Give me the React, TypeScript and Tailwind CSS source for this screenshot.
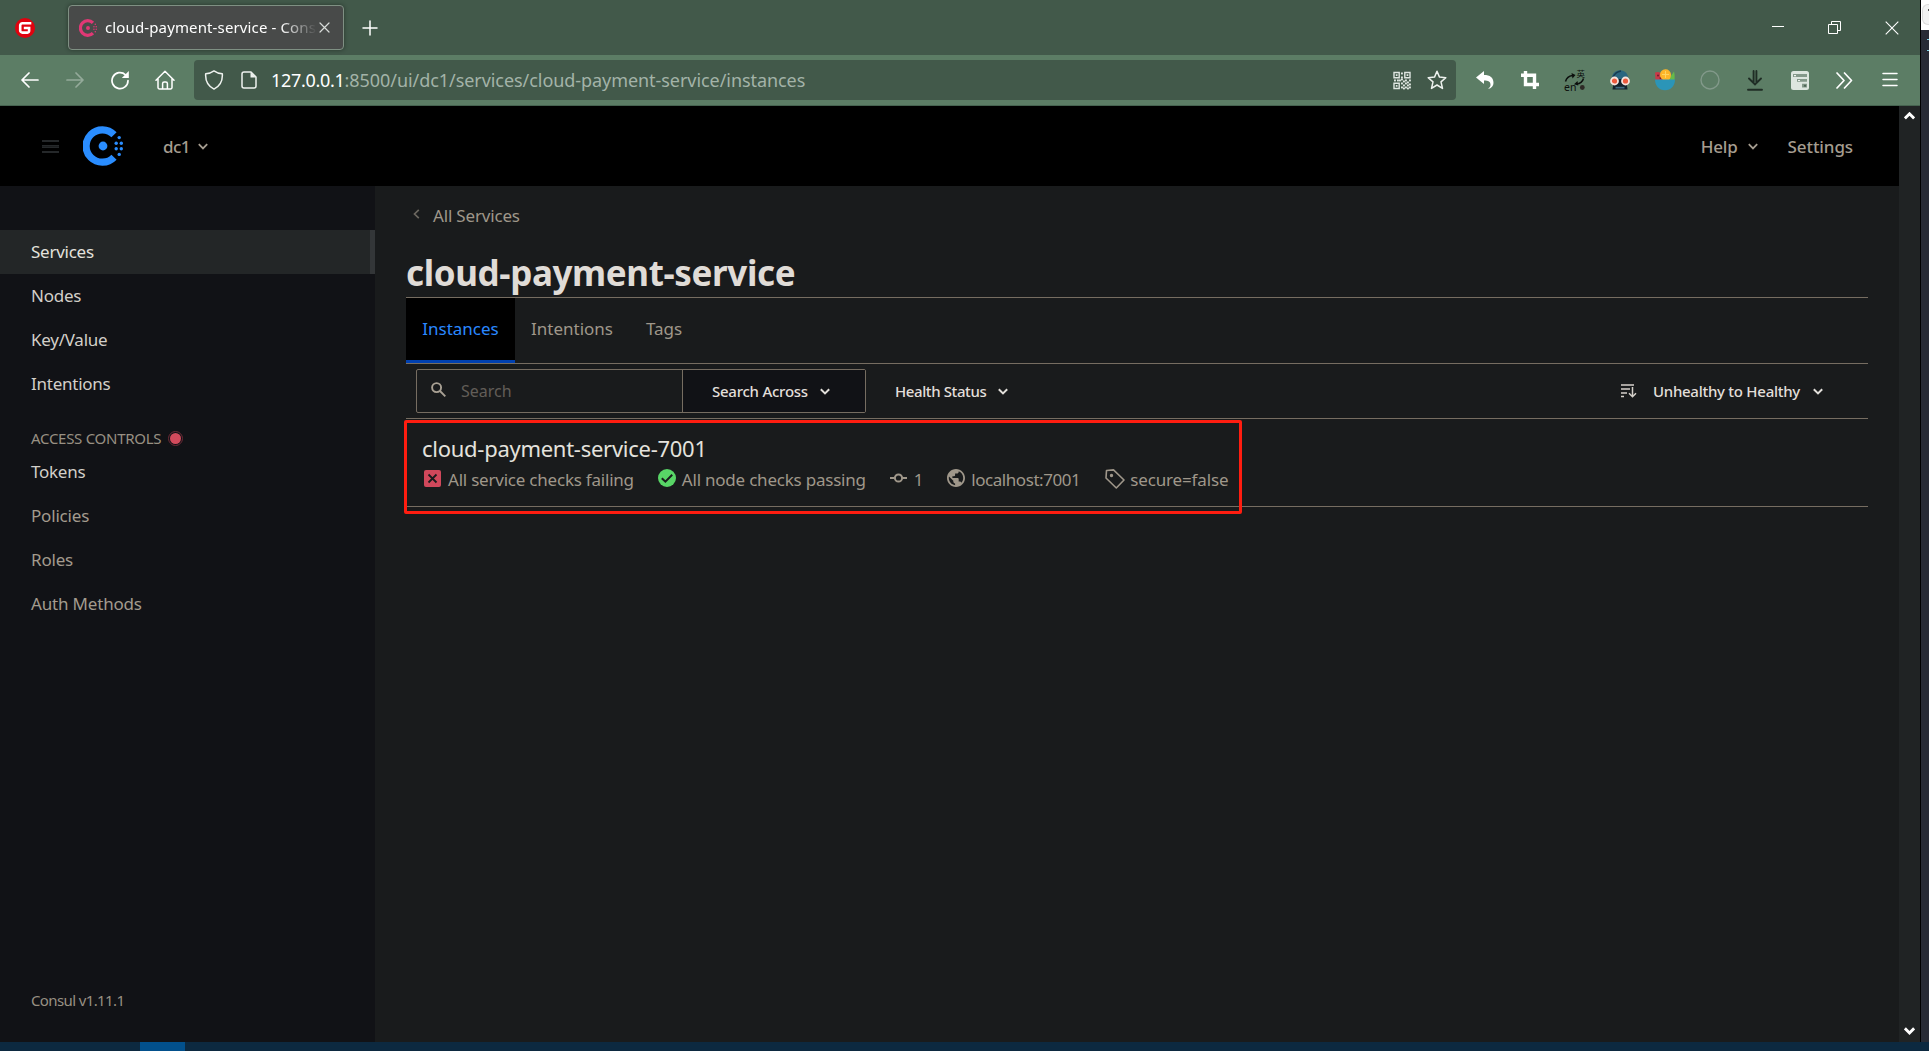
import type { ReactNode } from "react";

function ConsulMark({ size, className }: { size: number; className: string }) {
  return (
    <svg width={size} height={size} viewBox="0 0 40 40" className={className} fill="none">
      <path d="M31 8.8 A16.2 16.2 0 1 0 31 31.2" stroke="currentColor" strokeWidth="7.2" />
      <circle cx="20" cy="20" r="4.4" fill="currentColor" />
      <g fill="currentColor">
        <circle cx="36.2" cy="11.6" r="1.7" />
        <circle cx="36.2" cy="28.4" r="1.7" />
        <circle cx="33.2" cy="17.3" r="1.7" />
        <circle cx="38.3" cy="17.3" r="1.7" />
        <circle cx="33.2" cy="22.7" r="1.7" />
        <circle cx="38.3" cy="22.7" r="1.7" />
      </g>
    </svg>
  );
}

function Chevron({ className = "", w = 10, sw = 2 }: { className?: string; w?: number; sw?: number }) {
  return (
    <svg width={w} height={w * 0.7} viewBox="0 0 10 7" fill="none" className={className}>
      <path d="M.8 1.200 5 5.400 9.200 1.200" stroke="currentColor" strokeWidth={sw} />
    </svg>
  );
}

function Slot({ children }: { children: ReactNode }) {
  return <div className="flex h-10 w-[45px] shrink-0 items-center justify-center">{children}</div>;
}

const ln = { fill: "none", stroke: "currentColor", strokeWidth: 1.5, strokeLinecap: "round", strokeLinejoin: "round" } as const;

function BrowserTitleBar() {
  return (
    <div className="flex h-[55px] items-start bg-[#42594a] text-white">
      <svg width="20" height="20" viewBox="0 0 20 20" className="mt-[18px] ml-[15px] shrink-0">
        <circle cx="10" cy="10" r="10" fill="#e0020f" />
        <path d="M16.300 5.200H7.400a2.200 2.200 0 0 0-2.200 2.200v5a2.200 2.200 0 0 0 2.200 2.200h5.200a1.500 1.500 0 0 0 1.500-1.500V10H8.800" fill="none" stroke="#fff" strokeWidth="2.600" />
      </svg>
      <div className="mt-[5px] ml-[33px] flex h-[45px] w-[276px] items-center rounded-[4px] border border-[#7f9083] bg-[#484a49] shadow-[0_0_4px_rgba(0,0,0,0.4)]">
        <ConsulMark size={18} className="ml-[10px] text-[#e03875]" />
        <div className="-mt-[2px] ml-2 w-[213px] overflow-hidden [mask-image:linear-gradient(to_right,#000_175px,transparent_212px)]">
          <span className="text-[15px] leading-6 tracking-[0.13px] whitespace-nowrap">cloud-payment-service - Consul</span>
        </div>
        <svg width="11" height="11" viewBox="0 0 11 11" className="ml-px"><path d="M1 1l9 9M10 1l-9 9" {...ln} strokeWidth="1.200" stroke="#d8dcd9" /></svg>
      </div>
      <svg width="16" height="16" viewBox="0 0 16 16" className="mt-5 ml-[18px]"><path d="M8 1v14M1 8h14" {...ln} /></svg>
      <div className="ml-auto flex h-[55px]">
        <div className="flex w-[57px] items-center justify-center"><div className="mb-[2px] h-px w-3 bg-white" /></div>
        <div className="flex w-[57px] items-center justify-center">
          <svg width="13" height="13" viewBox="0 0 13 13" fill="none" stroke="#fff"><path d="M.5 3.500h9v9h-9zM3.500 3.500v-3h9v9h-3" /></svg>
        </div>
        <div className="flex w-[57px] items-center justify-center">
          <svg width="14" height="14" viewBox="0 0 14 14" stroke="#fff" strokeWidth="1.100"><path d="M.7.7l12.600 12.600M13.300.7.7 13.300" /></svg>
        </div>
      </div>
    </div>
  );
}

function QrIcon() {
  const cells = [[8, 1], [8, 5], [1, 8], [4, 8], [6, 8], [8, 7], [10, 9], [12, 8], [14, 10], [16, 8], [8, 11], [10, 13], [12, 11], [14, 13], [16, 12], [16, 15], [12, 15], [8, 15], [10, 16], [14, 16]];
  return (
    <svg width="18" height="19" viewBox="0 0 18 18" fill="none" stroke="#dfe6e1" strokeWidth="1.400">
      <path d="M1 1h5.200v5.200H1zM11.800 1H17v5.200h-5.200zM1 11.800h5.200V17H1z" />
      <g fill="#dfe6e1" stroke="none">
        <path d="M2.800 2.800h1.700v1.700H2.800zM13.600 2.800h1.700v1.700h-1.700zM2.800 13.600h1.700v1.700H2.800z" />
        {cells.map(([x, y]) => <rect key={`${x}-${y}`} x={x} y={y} width="1.900" height="1.900" />)}
      </g>
    </svg>
  );
}

function BrowserToolbar() {
  return (
    <div className="flex h-[51px] items-center border-b border-[#466350] bg-[#5c7d65] pl-[7px] text-white">
      <Slot><svg width="18" height="16" viewBox="0 0 18 16"><path d="M17 8H1.200M8 1 1 8l7 7" {...ln} strokeWidth="1.700" /></svg></Slot>
      <Slot><svg width="18" height="16" viewBox="0 0 18 16" className="text-[#94aa9a]"><path d="M1 8h15.800M10 1l7 7-7 7" {...ln} strokeWidth="1.700" /></svg></Slot>
      <Slot>
        <svg width="20" height="20" viewBox="0 0 20 20"><path d="M18 10.500A8 8 0 1 1 15.500 4.800" {...ln} strokeWidth="1.700" /><path d="M18.800 1v7h-7z" fill="#fff" /></svg>
      </Slot>
      <Slot>
        <svg width="20" height="20" viewBox="0 0 20 20"><path d="M1 10.300 10 1.300l9 9M3 8.500v8.900a1.500 1.500 0 0 0 1.500 1.500h11a1.500 1.500 0 0 0 1.500-1.500V8.500M7.600 18.700v-5.200a1.600 1.600 0 0 1 1.600-1.600h1.600a1.600 1.600 0 0 1 1.600 1.600v5.200" {...ln} /></svg>
      </Slot>
      <div className="ml-[7px] flex h-10 w-[1262px] shrink-0 items-center rounded-[4px] bg-[#42594a]">
        <svg width="20" height="20" viewBox="0 0 20 20" className="ml-[10px] text-[#eef2ef]"><path d="M10 .9c2.500 1.800 5.300 2.700 8.300 2.900.5 6.700-1.800 11.900-8.300 15.300C3.500 15.700 1.200 10.500 1.700 3.800 4.700 3.600 7.500 2.700 10 .9z" {...ln} /></svg>
        <svg width="16" height="18" viewBox="0 0 16 18" className="ml-[17px] text-[#eef2ef]"><path d="M3 1h7l5 5v9a2 2 0 0 1-2 2H3a2 2 0 0 1-2-2V3a2 2 0 0 1 2-2z" {...ln} /><path d="M9.500 1v5.500h5.500z" fill="currentColor" /></svg>
        <div className="ml-[14px] flex text-[18px] leading-6 whitespace-nowrap">
          <span className="tracking-[-0.3px]">127.0.0.1</span>
          <span className="tracking-[-0.06px] text-[#a3b3a8]">:8500/ui/dc1/services/cloud-payment-service/instances</span>
        </div>
        <div className="mr-[9px] ml-auto flex items-center gap-4">
          <QrIcon />
          <svg width="20" height="20" viewBox="0 0 20 20" className="text-[#eef2ef]"><path d="M10 1.200l2.500 5.900 6.300.6-4.800 4.200 1.500 6.500-5.500-3.400-5.500 3.400L6 11.900 1.200 7.700l6.300-.6z" {...ln} /></svg>
        </div>
      </div>
      <div className="ml-[6px] flex">
        <Slot><svg width="18" height="18" viewBox="0 0 18 18" fill="#fff"><path d="M0 6.500 8 0v4c6 0 9.500 2.500 9.500 8 0 3-2 5.300-5.500 6 2-1.500 2.500-2.700 2.500-4.200 0-3-2-4.300-6.500-4.300V13z" /></svg></Slot>
        <Slot><svg width="18" height="18" viewBox="0 0 18 18" fill="none" stroke="#fff" strokeWidth="3.400"><path d="M4.500 0v13.500H18M0 4.300h13.500V18" /></svg></Slot>
        <Slot>
          <svg width="21" height="22" viewBox="0 0 21 22" className="overflow-visible">
            <path d="M1.500 12.500C2.500 9 5 7 8.500 6.500M19.500 9.500c-1 3.500-3.500 5.300-7 5.500" stroke="#0c0f0d" strokeWidth="1.500" fill="none" />
            <path d="M7.500 4l4 2-3 3.500zM13.500 12l-3.500 3.300 4.300 1.200z" fill="#0c0f0d" />
            <text x="12.500" y="7.800" fontSize="8.500" fontFamily="Noto Sans CJK SC, sans-serif" fill="#0c0f0d">英</text>
            <text x="0" y="21.500" fontSize="10.500" fontFamily="Noto Sans, sans-serif" fill="#0c0f0d">en</text>
            <circle cx="18.300" cy="18.500" r="2.400" fill="#2e2a26" />
          </svg>
        </Slot>
        <Slot>
          <svg width="20" height="20" viewBox="0 0 20 20">
            <path d="M1.500 10C1.500 4 5 .3 10 .3S18.500 4 18.500 10z" fill="#2a6680" />
            <path d="M3 7C5 3 8 1.500 11 1" stroke="#173b50" strokeWidth="1.500" fill="none" />
            <path d="M4 9h12l1.500 10.500h-15z" fill="#14222c" />
            <path d="M5.500 16.800h9v1.700h-9z" fill="#426b80" />
            <circle cx="4.500" cy="11" r="3.500" fill="#ee5b3e" stroke="#f6e3dc" strokeWidth="1.800" />
            <circle cx="15.500" cy="11" r="3.500" fill="#ee5b3e" stroke="#f6e3dc" strokeWidth="1.800" />
          </svg>
        </Slot>
        <Slot>
          <svg width="20" height="22" viewBox="0 0 20 22">
            <path d="M0 3.500c4-2 8.500 1 9 7.500H.5z" fill="#c93a48" />
            <circle cx="3" cy="6.500" r="1" fill="#6e1d2c" /><circle cx="5.500" cy="9" r="1" fill="#6e1d2c" />
            <path d="M13 11l6-8.500c.8 3 .8 6 .5 8.500z" fill="#66b94a" />
            <path d="M5 6a5.500 5.500 0 0 1 11-.5c0 2.500-1 4.500-2 5.500H8C6 9.500 5 8 5 6z" fill="#fdb52a" />
            <path d="M7 5.500h7M10.500 2v7" stroke="#ffd35f" strokeWidth="1" />
            <path d="M0 10.500h20c0 6-4 10.800-10 10.800S0 16.500 0 10.500z" fill="#2b95b8" />
          </svg>
        </Slot>
        <Slot><svg width="20" height="20" viewBox="0 0 20 20"><circle cx="10" cy="10" r="9" fill="none" stroke="#82998a" strokeWidth="1.400" /></svg></Slot>
        <Slot><svg width="16" height="21" viewBox="0 0 16 21" fill="none" stroke="#1f2d25" strokeWidth="1.900" strokeLinecap="round"><path d="M6.600 1v12M9.400 1v12M2 8.500l6 6 6-6M1 19.800h14" /></svg></Slot>
        <Slot>
          <svg width="18" height="19" viewBox="0 0 18 19">
            <rect width="18" height="19" rx="2.500" fill="#dde6df" />
            <path d="M2 3h14v3H2zM6 8h10v2.800H6zM11 12.800h5v3.700h-5z" fill="#84998a" />
            <path d="M3 4h2v1.200H3zM7 9h2v1H7zM12.500 14h2v1.500h-2z" fill="#eef3ef" />
            <path d="M12.500 13.800h2.500v2h-2.500z" fill="#4c6554" />
          </svg>
        </Slot>
        <Slot><svg width="17" height="17" viewBox="0 0 17 17"><path d="M1 1l7 7.500-7 7.500M8.500 1l7 7.500-7 7.500" {...ln} strokeWidth="1.700" /></svg></Slot>
        <Slot><svg width="16" height="15" viewBox="0 0 16 15" className="-mt-px"><path d="M1 1.500h14M1 7.500h14M1 13.500h14" {...ln} /></svg></Slot>
      </div>
    </div>
  );
}

function ConsulHeader() {
  return (
    <header className="flex h-20 items-center bg-black text-[17px] font-medium text-[#a59d90]">
      <div className="ml-[42px] flex w-[17px] flex-col gap-[3px]">
        <div className="h-[2px] bg-[#25282a]" />
        <div className="h-[3px] border-y border-[#25282a] bg-[#1b1d1e]" />
        <div className="h-[2px] bg-[#25282a]" />
      </div>
      <ConsulMark size={40} className="ml-6 text-[#2a8dff]" />
      <span className="mt-[2px] ml-10 tracking-[-0.6px]">dc1</span>
      <Chevron className="ml-[8px]" sw={1.8} />
      <span className="mt-[2px] ml-auto tracking-[-0.2px]">Help</span>
      <Chevron className="ml-[10px]" sw={1.8} />
      <span className="mt-[2px] mr-[46px] ml-[30px] tracking-[-0.1px]">Settings</span>
    </header>
  );
}

function NavItem({ label, bright, active }: { label: string; bright?: boolean; active?: boolean }) {
  if (active) {
    return <div className="flex h-11 items-center border-r-[5px] border-[#333638] bg-[#232627] pl-[31px] text-[17px] tracking-[-0.25px] text-[#e4e2dd]">{label}</div>;
  }
  return <div className={bright ? "flex h-11 items-center pl-[31px] text-[17px] tracking-[-0.25px] text-[#d3cfc9]" : "flex h-11 items-center pl-[31px] text-[17px] tracking-[-0.18px] text-[#a39b8e]"}>{label}</div>;
}

function Sidebar() {
  return (
    <nav className="flex w-[375px] shrink-0 flex-col bg-[#111216] pt-11">
      <NavItem label="Services" active />
      <NavItem label="Nodes" bright />
      <NavItem label="Key/Value" bright />
      <NavItem label="Intentions" bright />
      <div className="mt-[21px] flex h-[23px] items-center pl-[31px] text-[15px] text-[#989083]">
        <span className="tracking-[-0.28px]">ACCESS CONTROLS</span>
        <div className="ml-[7px] flex size-[15px] items-center justify-center rounded-full border border-[#6d2a37]"><div className="size-[11px] rounded-full bg-[#d34a5c]" /></div>
      </div>
      <NavItem label="Tokens" bright />
      <NavItem label="Policies" />
      <NavItem label="Roles" />
      <NavItem label="Auth Methods" />
      <div className="mt-auto mb-[30px] pl-[31px] text-[15px] leading-6 tracking-[-0.62px] text-[#989083]">Consul v1.11.1</div>
    </nav>
  );
}

function Toolbar() {
  return (
    <div className="flex h-[55px] items-center border-b border-[#766d61] pl-[10px] text-[15px] font-medium text-[#e2dfda]">
      <div className="flex h-[44px] w-[450px] rounded-[2px] border border-[#766d61]">
        <div className="flex flex-1 items-center">
          <svg width="15" height="15" viewBox="0 0 15 15" className="-mt-[3px] ml-[14px]" fill="none" stroke="#a9a194" strokeWidth="1.900"><circle cx="5.600" cy="5.600" r="4.500" /><path d="M9 9l5.300 5.300" /></svg>
          <span className="ml-[15px] text-[16px] font-normal text-[#625e58]">Search</span>
        </div>
        <div className="flex w-[183px] items-center border-l border-[#766d61] bg-[#111216] pl-[29px]">
          <span className="tracking-[-0.25px]">Search Across</span>
          <Chevron className="ml-[12px]" />
        </div>
      </div>
      <span className="ml-[29px] tracking-[-0.4px]">Health Status</span>
      <Chevron className="ml-[12px]" />
      <svg width="16" height="14" viewBox="0 0 16 14" className="ml-auto" fill="none" stroke="#d5d1ca" strokeWidth="1.500"><path d="M0 1h13M0 5h9M0 9h6M0 12.500h3M11.500 3v9.500M8 9.300l3.500 3.500L15 9.300" /></svg>
      <span className="ml-[16px] tracking-[-0.27px]">Unhealthy to Healthy</span>
      <Chevron className="mr-[45px] ml-[13px]" />
    </div>
  );
}

function InstanceRow() {
  return (
    <div className="relative h-[88px] border-b border-[#766d61] pt-[14px] pl-4">
      <div className="h-8 text-[22px] leading-[30px] tracking-[-0.27px] text-[#e4e2dd]">cloud-payment-service-7001</div>
      <div className="flex h-[30px] items-center text-[17px] tracking-[-0.22px] text-[#9f978a]">
        <svg width="17" height="17" viewBox="0 0 17 17" className="-mt-1 ml-[2px]"><rect width="17" height="17" rx="2" fill="#d0485b" /><path d="M4.500 4.500l8 8M12.500 4.500l-8 8" stroke="#191b1c" strokeWidth="1.800" /></svg>
        <span className="ml-[7px]">All service checks failing</span>
        <svg width="18" height="18" viewBox="0 0 18 18" className="-mt-1 ml-6"><circle cx="9" cy="9" r="9" fill="#58d566" /><path d="M3.800 9.200l3.600 3.500 6.800-7" fill="none" stroke="#191b1c" strokeWidth="2" /></svg>
        <span className="ml-[6px]">All node checks passing</span>
        <svg width="17" height="10" viewBox="0 0 17 10" className="-mt-1 ml-[24px]" fill="none" stroke="currentColor" strokeWidth="2"><circle cx="8.500" cy="5" r="3.600" /><path d="M0 5h4.500M12.500 5H17" /></svg>
        <span className="ml-[7px]">1</span>
        <svg width="18" height="18" viewBox="2 2 20 20" className="-mt-1 ml-[24px]" fill="currentColor"><path d="M12 2C6.480 2 2 6.480 2 12s4.480 10 10 10 10-4.480 10-10S17.520 2 12 2zm-1 17.930c-3.950-.49-7-3.850-7-7.930 0-.62.080-1.210.210-1.790L9 15v1c0 1.100.9 2 2 2v1.930zm6.900-2.540c-.26-.81-1-1.390-1.900-1.390h-1v-3c0-.55-.45-1-1-1H8v-2h2c.55 0 1-.45 1-1V7h2c1.100 0 2-.9 2-2v-.41c2.930 1.190 5 4.060 5 7.410 0 2.080-.8 3.970-2.100 5.390z" /></svg>
        <span className="ml-[6px] tracking-[-0.45px]">localhost:7001</span>
        <svg width="20" height="20" viewBox="0 0 20 20" className="-mt-[3px] ml-[25px]" fill="none" stroke="currentColor" strokeWidth="1.600" strokeLinejoin="round"><path d="M1.500 1.500 8.500 .9 19 11 11.300 19 1 9z" /><circle cx="6.500" cy="6.500" r=".9" fill="currentColor" /></svg>
        <span className="ml-[5px] tracking-[-0.15px]">secure=false</span>
      </div>
      <div className="pointer-events-none absolute top-px -left-[2px] h-[94px] w-[838px] rounded-[2px] border-[3px] border-[#ff1d10]" />
    </div>
  );
}

function ServicePage() {
  return (
    <main className="flex-1 bg-[#191b1c] pr-[31px] pl-[31px] text-[#9f978a]">
      <div className="flex h-[60px] items-center text-[17px]">
        <svg width="7" height="10" viewBox="0 0 7 10" className="-mt-1 ml-[7px]" fill="none" stroke="#6b675f" strokeWidth="1.700"><path d="M5.800 .8 1.500 5l4.300 4.200" /></svg>
        <span className="-mt-px ml-[13px] tracking-[-0.18px]">All Services</span>
      </div>
      <h1 className="h-[52px] border-b border-[#766d61] text-[35px] leading-[54px] font-bold tracking-[-0.38px] text-[#e0dcd7]">cloud-payment-service</h1>
      <div className="flex h-[66px] border-b border-[#766d61] text-[17px]">
        <div className="flex w-[109px] items-center justify-center border-b-[3px] border-[#0040b0] bg-black text-[#2a88ff]">Instances</div>
        <div className="ml-4 flex items-center pb-[3px]">Intentions</div>
        <div className="ml-[33px] flex items-center pb-[3px]">Tags</div>
      </div>
      <Toolbar />
      <InstanceRow />
    </main>
  );
}

export default function App() {
  return (
    <div className="flex h-[1051px] w-[1929px] flex-col overflow-hidden font-['Noto_Sans','Open_Sans',sans-serif]">
      <div className="flex h-[1042px]">
        <div className="flex w-[1920px] flex-col">
          <BrowserTitleBar />
          <BrowserToolbar />
          <div className="flex flex-1">
            <div className="flex w-[1899px] flex-col">
              <ConsulHeader />
              <div className="flex flex-1"><Sidebar /><ServicePage /></div>
            </div>
            <div className="flex w-[21px] flex-col items-center justify-between bg-[#202324] pt-[6px] pb-[7px] text-white">
              <Chevron className="rotate-180" w={11} sw={2.6} />
              <Chevron w={11} sw={2.6} />
            </div>
          </div>
        </div>
        <div className="w-px bg-black" />
        <div className="flex w-2 flex-col items-end bg-[#282b35]">
          <div className="flex h-[30px] w-2 justify-end overflow-hidden bg-white pt-1">
            <div className="h-[21px] w-[7px] rounded-l-[6px] border border-r-0 border-[#dcdcdc] bg-[#f3f3f3] pt-1 pl-[5px]"><div className="size-[2px] bg-[#555]" /></div>
          </div>
          <div className="mt-[9px] h-px w-[2px] bg-[#7fd3e6]" />
          <div className="mt-[10px] h-px w-[2px] bg-[#7fd3e6]" />
        </div>
      </div>
      <div className="flex h-[9px] bg-[#0c2940] pl-[140px]"><div className="w-[45px] bg-[#02508c]" /></div>
    </div>
  );
}
